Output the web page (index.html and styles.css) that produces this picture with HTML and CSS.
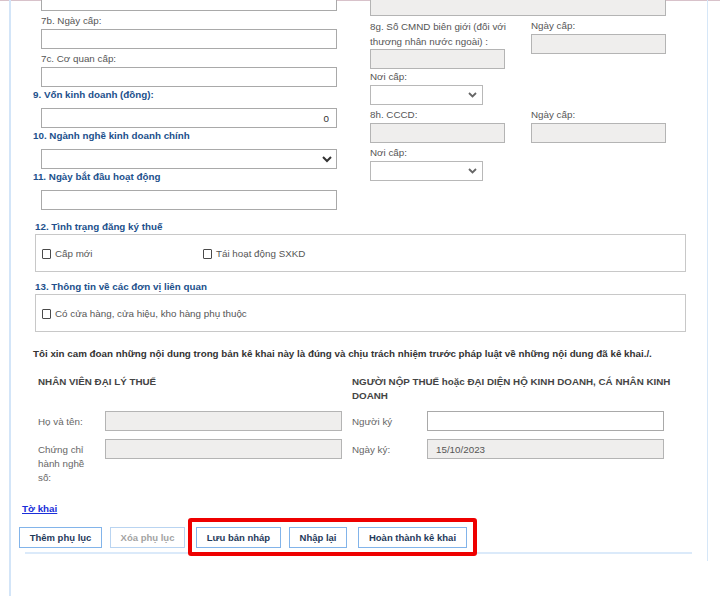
FILE: index.html
```html
<!DOCTYPE html>
<html lang="vi">
<head>
<meta charset="utf-8">
<title>Tờ khai</title>
<link rel="stylesheet" href="styles.css">
</head>
<body>
<div class="topline"></div>
<div class="page">
  <div class="frame">
    <div class="upper">
      <div class="col-left">
        <input class="inp sub" type="text">
        <div class="fld">
          <span class="lbl sub">7b. Ngày cấp:</span>
          <input class="inp sub" type="text">
        </div>
        <div class="fld">
          <span class="lbl sub">7c. Cơ quan cấp:</span>
          <input class="inp sub" type="text">
        </div>
        <div class="fld sec">
          <span class="lbl-sec">9. Vốn kinh doanh (đồng):</span>
          <input class="inp sub num" type="text" value="0">
        </div>
        <div class="fld sec">
          <span class="lbl-sec">10. Ngành nghề kinh doanh chính</span>
          <div class="sel sub wide">
            <svg width="10" height="7" viewBox="0 0 10 7"><polyline points="1,1 5,5 9,1" fill="none" stroke="#333" stroke-width="2"/></svg>
          </div>
        </div>
        <div class="fld sec">
          <span class="lbl-sec">11. Ngày bắt đầu hoạt động</span>
          <input class="inp sub" type="text">
        </div>
      </div>
      <div class="col-right">
        <input class="inp gray full" type="text">
        <div class="r-row r-b">
          <div>
            <span class="lbl two">8g. Số CMND biên giới (đối với thương nhân nước ngoài) :</span>
            <input class="inp gray half" type="text">
          </div>
          <div>
            <span class="lbl">Ngày cấp:</span>
            <input class="inp gray half" type="text">
          </div>
        </div>
        <div class="r-c">
          <span class="lbl">Nơi cấp:</span>
          <div class="sel small">
            <svg width="9" height="6" viewBox="0 0 9 6"><polyline points="1,1 4.5,4.5 8,1" fill="none" stroke="#666" stroke-width="1.8"/></svg>
          </div>
        </div>
        <div class="r-row r-d">
          <div>
            <span class="lbl">8h. CCCD:</span>
            <input class="inp gray half" type="text">
          </div>
          <div>
            <span class="lbl">Ngày cấp:</span>
            <input class="inp gray half" type="text">
          </div>
        </div>
        <div class="r-e">
          <span class="lbl">Nơi cấp:</span>
          <div class="sel small">
            <svg width="9" height="6" viewBox="0 0 9 6"><polyline points="1,1 4.5,4.5 8,1" fill="none" stroke="#666" stroke-width="1.8"/></svg>
          </div>
        </div>
      </div>
    </div>

    <div class="section s12">
      <div class="lbl-sec">12. Tình trạng đăng ký thuế</div>
      <div class="chk-box">
        <label class="chk w161"><span class="cb"></span><span>Cấp mới</span></label>
        <label class="chk"><span class="cb"></span><span>Tái hoạt động SXKD</span></label>
      </div>
    </div>

    <div class="section s13">
      <div class="lbl-sec">13. Thông tin về các đơn vị liên quan</div>
      <div class="chk-box">
        <label class="chk"><span class="cb"></span><span>Có cửa hàng, cửa hiệu, kho hàng phụ thuộc</span></label>
      </div>
    </div>

    <p class="oath">Tôi xin cam đoan những nội dung trong bản kê khai này là đúng và chịu trách nhiệm trước pháp luật về những nội dung đã kê khai./.</p>

    <div class="sign">
      <div class="shdr">NHÂN VIÊN ĐẠI LÝ THUẾ</div>
      <div class="shdr">NGƯỜI NỘP THUẾ hoặc ĐẠI DIỆN HỘ KINH DOANH, CÁ NHÂN KINH DOANH</div>
      <div class="srow">
        <span class="slbl-l">Họ và tên:</span>
        <input class="inp gray sinp" type="text">
      </div>
      <div class="srow">
        <span class="slbl-r">Người ký</span>
        <input class="inp sinp" type="text">
      </div>
      <div class="srow">
        <span class="slbl-l">Chứng chỉ hành nghề số:</span>
        <input class="inp gray sinp" type="text">
      </div>
      <div class="srow">
        <span class="slbl-r">Ngày ký:</span>
        <input class="inp gray sinp date" type="text" value="15/10/2023">
      </div>
    </div>

    <div class="linkrow"><a class="link" href="#">Tờ khai</a></div>

    <div class="btnrow">
      <button class="btn b1" type="button">Thêm phụ lục</button>
      <button class="btn b2 disabled" type="button">Xóa phụ lục</button>
      <div class="mark">
        <button class="btn b3" type="button">Lưu bản nháp</button>
        <button class="btn b4" type="button">Nhập lại</button>
        <button class="btn b5" type="button">Hoàn thành kê khai</button>
      </div>
    </div>
    <div class="rule"></div>
  </div>
</div>
</body>
</html>
```

FILE: styles.css
```css
* { box-sizing: border-box; }
html, body { margin: 0; padding: 0; background: #fff; }
body {
  font-family: "Liberation Sans", Arial, sans-serif;
  font-size: 9.8px;
  color: #555;
  height: 606px;
  overflow: hidden;
}

.topline { height: 1px; background: #d8c2ca; }

.page {
  margin-left: 9px;
  border-left: 2px solid #d3e5f8;
  height: 605px;
}
.frame {
  width: 697px;
  border-right: 1px solid #d6e7f8;
  padding-bottom: 7px;
}

/* inputs */
.inp {
  display: block;
  height: 20px;
  width: 296px;
  margin: 0;
  padding: 0 6px;
  border: 1px solid #a9a9a9;
  background: #fff;
  font-family: inherit;
  font-size: 9.8px;
  color: #555;
  outline: none;
}
.inp.gray { background: #efeeed; border-color: #b4b4b4; }
.inp.num { text-align: right; padding-right: 7px; color: #333; }
.sub { margin-left: 8px; }

.upper {
  display: grid;
  grid-template-columns: 304px 296px;
  column-gap: 33px;
  margin-left: 22px;
  margin-top: -10px;
}

.fld { margin-top: 3px; }
.fld.sec { margin-top: 1px; }
.lbl {
  display: block;
  line-height: 14px;
  margin-bottom: 1px;
  color: #555;
}
.lbl.two { line-height: 15px; margin-bottom: 0; width: 142px; }
.lbl-sec {
  display: block;
  font-weight: bold;
  color: #21508c;
  line-height: 14px;
  margin-bottom: 6px;
}

.sel {
  height: 20px;
  border: 1px solid #a9a9a9;
  background: #fff;
  display: flex;
  align-items: center;
  justify-content: flex-end;
}
.sel.wide { width: 296px; padding-right: 4px; }
.sel.small { width: 113px; padding-right: 5px; border-color: #b8b8b8; }
.sel svg { display: block; }

/* right column */
.col-right .full { width: 296px; margin-top: 5px; }
.r-row {
  display: grid;
  grid-template-columns: 134px 134px;
  column-gap: 27px;
  align-items: start;
}
.r-b { margin-top: 3px; }
.r-c { margin-top: 1px; }
.r-d { margin-top: 3px; }
.r-e { margin-top: 3px; }
.inp.half { width: 135px; }

/* sections 12/13 */
.section { margin-left: 24px; width: 651px; }
.s12 { margin-top: 10px; }
.s13 { margin-top: 8px; }
.section .lbl-sec { margin-bottom: 0; }
.chk-box {
  height: 38px;
  border: 1px solid #c8c8c8;
  display: flex;
  align-items: center;
  padding-left: 6px;
  padding-top: 1px;
}
.chk {
  display: flex;
  align-items: center;
  gap: 4px;
  color: #555;
}
.chk.w161 { width: 161px; }
.cb {
  display: inline-block;
  width: 9px;
  height: 10px;
  border: 1px solid #4a4a4a;
  border-radius: 1px;
  background: #fff;
}

.oath {
  margin: 15px 0 0 22px;
  line-height: 14px;
  font-weight: bold;
  color: #333;
}

/* signature block */
.sign {
  display: grid;
  grid-template-columns: 304px 322px;
  column-gap: 10px;
  row-gap: 8px;
  margin: 14px 0 0 27px;
}
.shdr {
  font-weight: bold;
  color: #444;
  line-height: 14px;
}
.srow { display: flex; align-items: flex-start; }
.slbl-l {
  width: 67px;
  padding: 4px 9px 0 0;
  line-height: 14px;
  color: #666;
}
.slbl-r {
  width: 75px;
  padding-top: 4px;
  line-height: 14px;
  color: #666;
}
.sinp { width: 237px; }
.inp.date { padding-left: 8px; color: #555; }

.linkrow { margin: 17px 0 0 11px; line-height: 14px; }
.link {
  font-weight: bold;
  color: #1a2fd9;
  text-decoration: underline;
}

/* buttons */
.btnrow {
  display: flex;
  align-items: flex-start;
  margin: 11px 0 0 8px;
  padding-bottom: 4px;
}
.btn {
  height: 21px;
  padding: 0;
  border: 1px solid #82b4ea;
  background: #fff;
  font-family: inherit;
  font-size: 9.5px;
  font-weight: bold;
  color: #1f3a5a;
  text-align: center;
  cursor: pointer;
}
.btn.disabled { color: #a3a3a3; border-color: #b9d4f1; }
.b1 { width: 83px; }
.b2 { width: 75px; margin-left: 8px; }
.b3 { width: 85px; }
.b4 { width: 58px; margin-left: 8px; }
.b5 { width: 109px; margin-left: 11px; }
.mark {
  position: relative;
  z-index: 1;
  display: flex;
  margin: -9px 0 -9px 3px;
  padding: 5px 6px 4px 4px;
  border: 4px solid #ee0000;
  border-radius: 3px;
}
.rule {
  margin-left: 14px;
  width: 667px;
  height: 2px;
  background: #dbeafa;
}
```
